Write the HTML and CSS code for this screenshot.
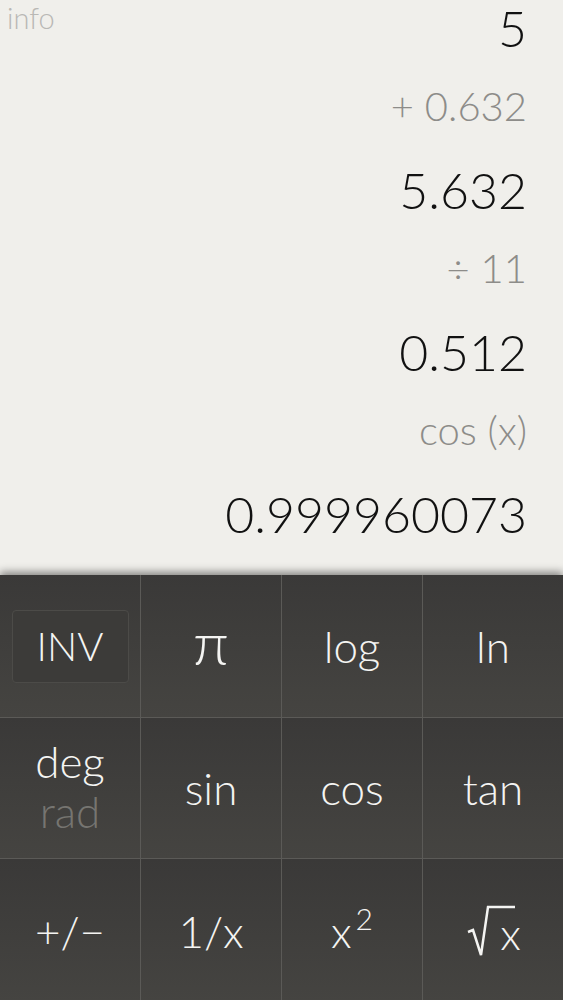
FILE: index.html
```html
<!DOCTYPE html>
<html lang="en">
<head>
    <meta charset="UTF-8">
    <title>Calculator</title>
    <link rel="stylesheet" href="styles.css">
</head>
<body>
    <div class="display">
        <div class="info">info</div>
        <div class="tape">
            <div class="line result">5</div>
            <div class="line op">+ 0.632</div>
            <div class="line result">5.632</div>
            <div class="line op">÷ 11</div>
            <div class="line result">0.512</div>
            <div class="line op">cos (x)</div>
            <div class="line result">0.999960073</div>
        </div>
    </div>

    <div class="keypad">
        <div class="key"><span class="inv">INV</span></div>
        <div class="key"><span class="pi">π</span></div>
        <div class="key">log</div>
        <div class="key">ln</div>

        <div class="key mode">
            <span class="on">deg</span>
            <span class="off">rad</span>
        </div>
        <div class="key">sin</div>
        <div class="key">cos</div>
        <div class="key">tan</div>

        <div class="key">+/&minus;</div>
        <div class="key">1/x</div>
        <div class="key"><span>x<sup>2</sup></span></div>
        <div class="key">
            <span class="sqrt">
                <svg class="radical" width="50" height="52" viewBox="0 0 50 52">
                    <path d="M1 27 L6 25 L14 50 L21 2 L48 2" fill="none" stroke="#f4f4f2" stroke-width="2.5"/>
                </svg>
                <span class="radicand">x</span>
            </span>
        </div>
    </div>
</body>
</html>
```

FILE: styles.css
```css
body {
    margin: 0;
    width: 563px;
    height: 1000px;
    overflow: hidden;
    font-family: Lato, "Open Sans", sans-serif;
    font-weight: 300;
    background-color: #f0efeb;
}
.display {
    display: flow-root;
    height: 575px;
    position: relative;
    background-color: #f0efeb;
}
.info {
    position: absolute;
    left: 7px;
    top: -1px;
    font-size: 29px;
    line-height: 38px;
    color: #b9b8b5;
}
.tape {
    display: flex;
    flex-direction: column;
    align-items: flex-end;
    margin-top: -12px;
    padding-right: 36px;
}
.line {
    white-space: nowrap;
}
.result {
    font-size: 50px;
    line-height: 80px;
    color: #111;
    height: 78px;
}
.op {
    font-size: 40px;
    line-height: 80px;
    height: 84px;
    color: #8d8c89;
}
.keypad {
    height: 425px;
    display: grid;
    grid-template-columns: repeat(4, 1fr);
    grid-template-rows: 142px 140px 143px;
    background-color: #5b5a57;
    gap: 1px;
    box-shadow: 0 -3px 8px rgba(0,0,0,0.45);
    position: relative;
}
.key {
    display: flex;
    flex-direction: column;
    align-items: center;
    justify-content: center;
    background: linear-gradient(to bottom, #3a3938, #454441);
    color: #f4f4f2;
    font-size: 44px;
}
.inv {
    display: flex;
    align-items: center;
    justify-content: center;
    width: 115px;
    height: 71px;
    border: 1px solid #4c4b48;
    border-radius: 4px;
    background-color: #3c3b39;
    font-size: 40px;
}
.pi {
    font-size: 60px;
    line-height: 1;
    margin-top: -8px;
}
.mode {
    line-height: 50px;
    padding-bottom: 4px;
}
.mode .off {
    color: #767571;
}
sup {
    font-size: 30px;
    vertical-align: 18px;
    line-height: 0;
    margin-left: 4px;
}
.sqrt {
    display: flex;
    align-items: center;
    margin-left: 2px;
}
.radical {
    display: block;
}
.radicand {
    line-height: 44px;
    margin-left: -17px;
    margin-top: 4px;
}
```
